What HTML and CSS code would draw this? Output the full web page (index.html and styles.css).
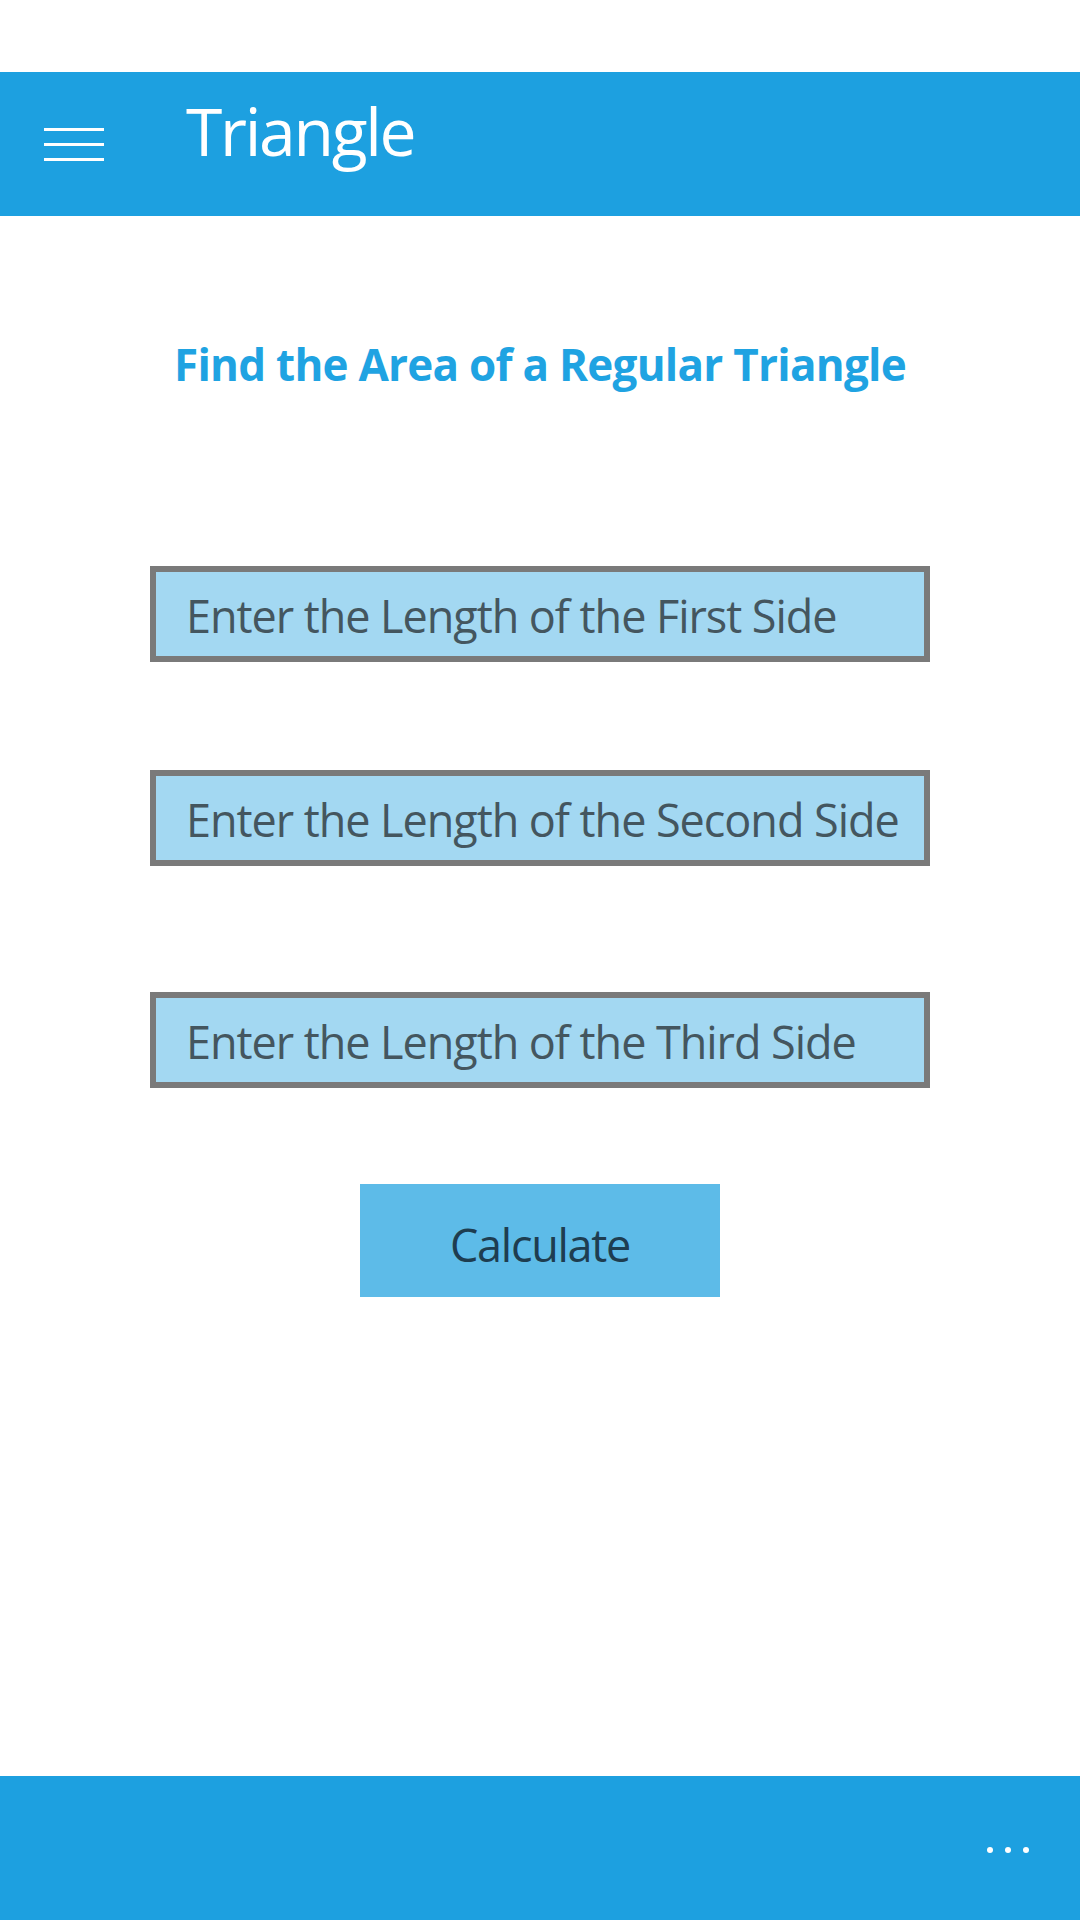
FILE: index.html
```html
<!DOCTYPE html>
<html lang="en">
<head>
<meta charset="utf-8">
<title>Triangle</title>
<link rel="stylesheet" href="styles.css">
</head>
<body>
<div class="app">
  <div class="status"></div>
  <header class="titlebar">
    <div class="hamburger"><span></span><span></span><span></span></div>
    <h1 class="title">Triangle</h1>
  </header>
  <main class="content">
    <h2 class="heading">Find the Area of a Regular Triangle</h2>
    <div class="field f1">Enter the Length of the First Side</div>
    <div class="field f2">Enter the Length of the Second Side</div>
    <div class="field f3">Enter the Length of the Third Side</div>
    <button class="calc">Calculate</button>
  </main>
  <footer class="appbar">
    <div class="more"><i></i><i></i><i></i></div>
  </footer>
</div>
</body>
</html>
```
FILE: styles.css
```css
html, body {
  margin: 0;
  padding: 0;
  background: #ffffff;
}
.app {
  width: 1080px;
  height: 1920px;
  display: flex;
  flex-direction: column;
  font-family: "Open Sans", "Noto Sans", sans-serif;
}
.status {
  height: 72px;
  background: #ffffff;
}
.titlebar {
  height: 144px;
  background: #1da0e0;
  display: flex;
  align-items: flex-start;
  box-sizing: border-box;
}
.hamburger {
  width: 60px;
  margin-left: 44px;
  margin-top: 56px;
  display: flex;
  flex-direction: column;
  gap: 12px;
}
.hamburger span {
  display: block;
  height: 3px;
  background: #ffffff;
}
.title {
  margin: 25px 0 0 82px;
  font-weight: 400;
  font-size: 66px;
  line-height: 66px;
  color: #ffffff;
  letter-spacing: -2.3px;
}
.content {
  flex: 1;
  display: flex;
  flex-direction: column;
  align-items: center;
}
.heading {
  margin: 126px 0 0 0;
  font-size: 44px;
  line-height: 44px;
  font-weight: 700;
  color: #1fa3e2;
  letter-spacing: -0.75px;
}
.field {
  width: 780px;
  height: 96px;
  box-sizing: border-box;
  border: 6px solid #7a7a7a;
  background: #a3d8f2;
  color: #44565f;
  font-size: 45px;
  line-height: 88px;
  padding-left: 30px;
  white-space: nowrap;
  overflow: hidden;
  letter-spacing: -1.05px;
}
.f1 { margin-top: 180px; }
.f2 { margin-top: 108px; }
.f3 { margin-top: 126px; }
.calc {
  margin-top: 96px;
  width: 360px;
  height: 113px;
  border: none;
  background: #5dbbe8;
  color: #1e3d50;
  font-family: "Open Sans", "Noto Sans", sans-serif;
  font-size: 45px;
  padding: 8px 0 0 0;
  letter-spacing: -1.3px;
}
.appbar {
  height: 144px;
  background: #1da0e0;
  display: flex;
  justify-content: flex-end;
  align-items: flex-start;
}
.more {
  display: flex;
  gap: 12px;
  margin-top: 71px;
  margin-right: 51px;
}
.more i {
  display: block;
  width: 6px;
  height: 6px;
  border-radius: 50%;
  background: #ffffff;
}
```
